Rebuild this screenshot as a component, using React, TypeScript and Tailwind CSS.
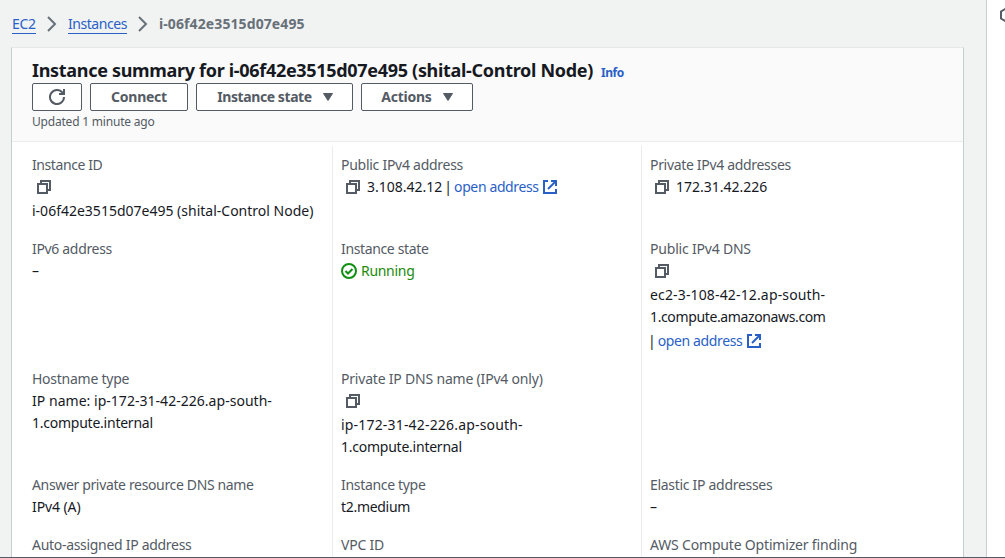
import React, { ReactNode } from "react";

function CopyIcon() {
  return (
    <svg className="ml-1 block h-4 w-4 shrink-0" viewBox="0 0 16 16" fill="none" stroke="#545b64" strokeWidth="2">
      <path d="M2 5h9v9H2z" />
      <path d="M5 5V2h9v9h-3" />
    </svg>
  );
}

function ExternalIcon({ className = "ml-1" }: { className?: string }) {
  return (
    <svg className={`block h-4 w-4 shrink-0 ${className}`} viewBox="0 0 16 16" fill="none" stroke="#2a5fc7" strokeWidth="2">
      <path d="M6 2H2v12h12v-4" />
      <path d="M9 2h5v5" />
      <path d="M6 10l7.5-7.5" />
    </svg>
  );
}

function Chevron() {
  return (
    <svg className="block h-4 w-4 shrink-0" viewBox="0 0 16 16" fill="none" stroke="#687078" strokeWidth="2">
      <path d="M4 1l7 7-7 7" />
    </svg>
  );
}

function Caret() {
  return (
    <svg className="block h-4 w-4 shrink-0" viewBox="0 0 16 16" fill="#545b64" stroke="#545b64" strokeWidth="1" strokeLinejoin="round">
      <path d="M3.5 4.5h9l-4.5 7z" />
    </svg>
  );
}

function Button({ className, children }: { className: string; children: ReactNode }) {
  return (
    <button className={`flex h-7 items-center justify-center whitespace-nowrap rounded-[2px] border border-[#545b64] bg-white text-[14px] font-bold leading-[22px] text-[#545b64] ${className}`}>
      {children}
    </button>
  );
}

function Line({ className = "", children }: { className?: string; children: ReactNode }) {
  return <div className={`min-h-[22px] whitespace-nowrap ${className}`}>{children}</div>;
}

function Cell({ label, tracking = "", className, children }: { label: ReactNode; tracking?: string; className: string; children?: ReactNode }) {
  return (
    <div className={`pb-4 ${className}`}>
      <Line className={`text-[#545b64] ${tracking}`}>{label}</Line>
      {children}
    </div>
  );
}

function CopyRow() {
  return <div className="h-6 pt-[3px]"><CopyIcon /></div>;
}

function OpenAddress() {
  return <a className="tracking-[-0.38px] text-[#2a5fc7]">open address</a>;
}

const first = "pl-5";
const other = "border-l border-[#eaeded] pl-2";

export default function App() {
  return (
    <div className="relative flex h-[558px] w-[1005px] overflow-hidden bg-white font-['Noto_Sans',sans-serif] text-[14px] leading-[22px] text-[#16191f]">
      <main className="h-full w-[987px] shrink-0 border-r border-[#c8cfcf] bg-[#f1f3f3] pl-[11px]">
        <nav className="flex h-[47px] items-center whitespace-nowrap pl-px pt-px">
          <a className="w-6 border-b border-[#2a5fc7] leading-[18px] tracking-[-0.33px] text-[#2a5fc7]">EC2</a>
          <span className="w-8 pl-2"><Chevron /></span>
          <a className="w-[59px] border-b border-[#2a5fc7] leading-[18px] tracking-[-0.45px] text-[#2a5fc7]">Instances</a>
          <span className="w-8 pl-2"><Chevron /></span>
          <span className="font-bold tracking-[0.1px] text-[#687078]">i-06f42e3515d07e495</span>
        </nav>
        <section className="w-[953px] border border-b-0 border-[#c8cfcf] border-t-[#e4e8e8] bg-white">
          <header className="h-[94px] border-b border-[#eaeded] bg-[#fafafa] pl-5 pt-2.5">
            <div className="flex h-[25px] items-baseline whitespace-nowrap">
              <h1 className="text-[18px] font-bold leading-6 tracking-[-0.31px]">Instance summary for i-06f42e3515d07e495 (shital-Control Node)</h1>
              <a className="ml-2 text-[12px] font-bold tracking-[-0.4px] text-[#2a5fc7]">Info</a>
            </div>
            <div className="flex gap-2">
              <Button className="w-[50px]">
                <svg className="h-4 w-4" viewBox="0 0 16 16" fill="none" stroke="#545b64" strokeWidth="2">
                  <path d="M15 8a7 7 0 1 1-1.5-4.3L15 5" />
                  <path d="M10 5h5V0" />
                </svg>
              </Button>
              <Button className="w-[98px] tracking-[-0.25px]">Connect</Button>
              <Button className="w-[157px] gap-2 pl-1 tracking-[-0.42px]"><span>Instance state</span><Caret /></Button>
              <Button className="w-[112px] gap-2 pl-[3px] tracking-[-0.25px]"><span>Actions</span><Caret /></Button>
            </div>
            <div className="pt-px text-[12px] leading-[19px] tracking-[-0.2px] text-[#545b64]">Updated 1 minute ago</div>
          </header>
          <div className="mt-1 grid grid-cols-[320px_309px_322px]">
            <Cell label="Instance ID" tracking="tracking-[-0.42px]" className={`pt-2 ${first}`}>
              <CopyRow />
              <Line>i-06f42e3515d07e495 (shital-Control Node)</Line>
            </Cell>
            <Cell label="Public IPv4 address" tracking="tracking-[-0.27px]" className={`pt-2 ${other}`}>
              <div className="flex h-[22px] items-center">
                <CopyIcon />
                <span className="ml-1.5">3.108.42.12</span>
                <span className="ml-[2px] mr-[2px]">|</span>
                <OpenAddress />
                <ExternalIcon className="ml-[3px]" />
              </div>
            </Cell>
            <Cell label="Private IPv4 addresses" tracking="tracking-[-0.32px]" className={`pt-2 ${other}`}>
              <div className="flex h-[22px] items-center"><CopyIcon /><span className="ml-1.5">172.31.42.226</span></div>
            </Cell>

            <Cell label="IPv6 address" tracking="tracking-[-0.33px]" className={first}><Line>–</Line></Cell>
            <Cell label="Instance state" tracking="tracking-[-0.36px]" className={other}>
              <div className="flex h-[22px] items-center gap-1 text-[#1a8a0a]">
                <svg className="h-4 w-4" viewBox="0 0 16 16" fill="none" stroke="#109010" strokeWidth="2">
                  <circle cx="8" cy="8" r="7" />
                  <path d="M4.5 8l2.5 2.5 4.5-4.5" />
                </svg>
                <span className="tracking-[-0.3px]">Running</span>
              </div>
            </Cell>
            <Cell label="Public IPv4 DNS" tracking="tracking-[-0.2px]" className={other}>
              <CopyRow />
              <Line className="tracking-[0.15px]">ec2-3-108-42-12.ap-south-</Line>
              <Line className="tracking-[-0.37px]">1.compute.amazonaws.com</Line>
              <div className="flex h-6 items-center pt-0.5">
                <span className="-ml-0.5 mr-[2px]">|</span>
                <OpenAddress />
                <ExternalIcon />
              </div>
            </Cell>

            <Cell label="Hostname type" tracking="tracking-[-0.25px]" className={first}>
              <Line className="tracking-[0.03px]">IP name: ip-172-31-42-226.ap-south-</Line>
              <Line className="tracking-[-0.24px]">1.compute.internal</Line>
            </Cell>
            <Cell label="Private IP DNS name (IPv4 only)" tracking="tracking-[-0.2px]" className={other}>
              <CopyRow />
              <Line className="tracking-[0.18px]">ip-172-31-42-226.ap-south-</Line>
              <Line className="tracking-[-0.24px]">1.compute.internal</Line>
            </Cell>
            <Cell label="" className={other} />

            <Cell label="Answer private resource DNS name" tracking="tracking-[-0.35px]" className={first}><Line className="tracking-[-0.1px]">IPv4 (A)</Line></Cell>
            <Cell label="Instance type" tracking="tracking-[-0.32px]" className={other}><Line className="tracking-[-0.3px]">t2.medium</Line></Cell>
            <Cell label="Elastic IP addresses" tracking="tracking-[-0.3px]" className={other}><Line>–</Line></Cell>

            <Cell label="Auto-assigned IP address" tracking="tracking-[-0.3px]" className={first} />
            <Cell label="VPC ID" tracking="tracking-[-0.2px]" className={other} />
            <Cell label="AWS Compute Optimizer finding" tracking="tracking-[-0.18px]" className={other} />
          </div>
        </section>
      </main>
      <aside className="shrink-0 pl-[13px] pt-[7px]">
        <svg className="h-4 w-4" viewBox="0 0 16 16" fill="none" stroke="#545b64" strokeWidth="2">
          <path d="M8 .5l7 4v7l-7 4-7-4v-7z" />
        </svg>
      </aside>
      <div className="absolute bottom-0 left-0 h-px w-full bg-[#545b64]" />
    </div>
  );
}
